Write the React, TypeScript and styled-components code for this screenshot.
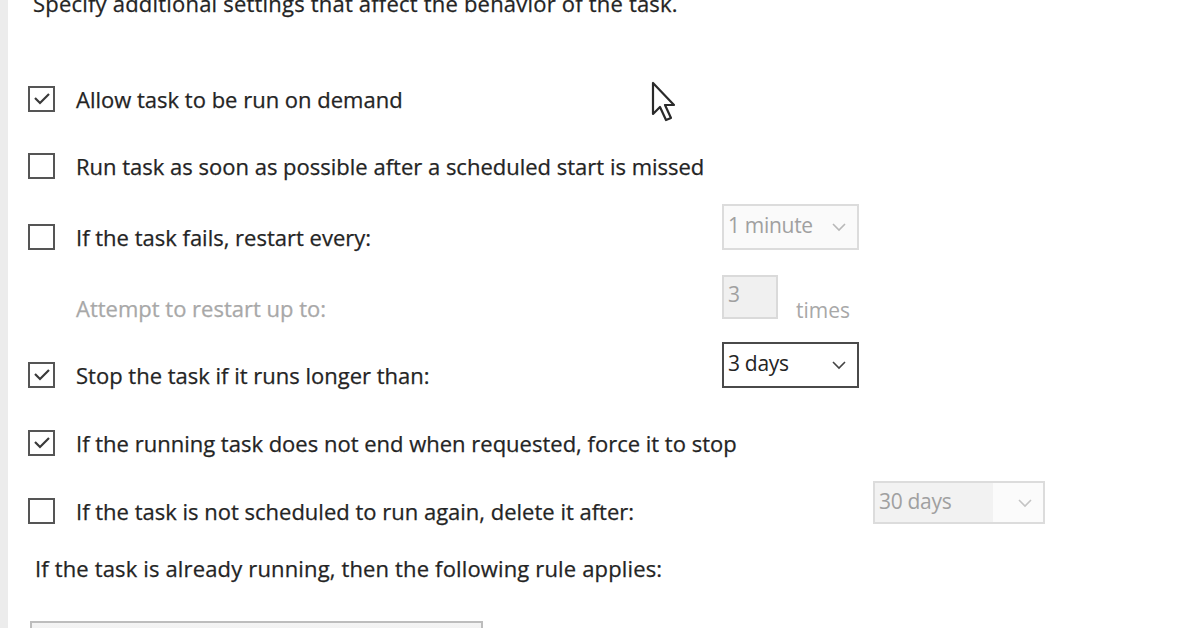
import React from 'react'
import styled, { createGlobalStyle } from 'styled-components'

const GlobalStyle = createGlobalStyle`
  html, body {
    margin: 0;
    padding: 0;
    background: #ffffff;
  }
  body {
    width: 1196px;
    height: 628px;
    overflow: hidden;
    font-family: "Open Sans", "Noto Sans", sans-serif;
    color: #242424;
  }
`

type RowSpec = {
  label: string
  checked?: boolean
  noBox?: boolean
  dim?: boolean
  gap: number
  control?: React.ReactNode
}

const Chevron: React.FC<{ color: string }> = ({ color }) => (
  <svg width="16" height="10" viewBox="0 0 16 10">
    <path d="M2 2 L8 8 L14 2" fill="none" stroke={color} strokeWidth="1.6" />
  </svg>
)

const Check: React.FC<{ checked?: boolean }> = ({ checked }) => (
  <Box>
    {checked && (
      <svg width="20" height="16" viewBox="0 0 20 16">
        <path d="M3 7 L8 12 L17 3" fill="none" stroke="#3a3a3a" strokeWidth="2.2" />
      </svg>
    )}
  </Box>
)

const Cursor: React.FC = () => (
  <Pointer width="26" height="42" viewBox="0 0 26 42">
    <path
      d="M2 2 L2 33 L9 26 L15 39 L20 37 L14 24 L23 24 Z"
      fill="#ffffff"
      stroke="#2a2a2a"
      strokeWidth="2.2"
      strokeLinejoin="round"
    />
  </Pointer>
)

export default function App() {
  const rows: RowSpec[] = [
    { label: 'Allow task to be run on demand', checked: true, gap: 59 },
    { label: 'Run task as soon as possible after a scheduled start is missed', gap: 21 },
    {
      label: 'If the task fails, restart every:',
      gap: 25,
      control: (
        <Select $disabled>
          <span>1 minute</span>
          <Chevron color="#b8b8b8" />
        </Select>
      ),
    },
    {
      label: 'Attempt to restart up to:',
      noBox: true,
      dim: true,
      gap: 25,
      control: (
        <Spin>
          <NumberBox>3</NumberBox>
          <Unit>times</Unit>
        </Spin>
      ),
    },
    {
      label: 'Stop the task if it runs longer than:',
      checked: true,
      gap: 21,
      control: (
        <Select>
          <span>3 days</span>
          <Chevron color="#444" />
        </Select>
      ),
    },
    {
      label: 'If the running task does not end when requested, force it to stop',
      checked: true,
      gap: 22,
    },
    {
      label: 'If the task is not scheduled to run again, delete it after:',
      gap: 22,
      control: (
        <Select $disabled $wide $shift={151}>
          <span>30 days</span>
          <Chevron color="#c4c4c4" />
        </Select>
      ),
    },
  ]

  return (
    <>
      <GlobalStyle />
      <Window>
        <Panel>
          <Intro>Specify additional settings that affect the behavior of the task.</Intro>
          {rows.map((r) => (
            <Row key={r.label} $gap={r.gap}>
              <BoxCell>{!r.noBox && <Check checked={r.checked} />}</BoxCell>
              <Label $dim={r.dim}>{r.label}</Label>
              <ControlCell>{r.control}</ControlCell>
            </Row>
          ))}
          <Note>If the task is already running, then the following rule applies:</Note>
          <RuleSelect />
          <Cursor />
        </Panel>
      </Window>
    </>
  )
}

const Window = styled.div`
  display: flex;
  height: 628px;
  border-left: 8px solid #ececec;
  box-sizing: border-box;
  overflow: hidden;
`

const Panel = styled.div`
  position: relative;
  flex: 1;
  display: flex;
  flex-direction: column;
  padding-left: 20px;
  & > * {
    flex-shrink: 0;
  }
`

const Intro = styled.div`
  margin-top: -11px;
  margin-left: 5px;
  font-size: 22px;
  line-height: 28px;
  letter-spacing: 0.2px;
  white-space: nowrap;
  -webkit-text-stroke: 0.25px #242424;
`

const Row = styled.div<{ $gap: number }>`
  display: grid;
  grid-template-columns: 48px 646px auto;
  align-items: center;
  height: 46px;
  margin-top: ${(p) => p.$gap}px;
`

const BoxCell = styled.div`
  display: flex;
  align-items: center;
`

const Box = styled.div`
  width: 23px;
  height: 22px;
  border: 2px solid #555;
  display: flex;
  align-items: center;
  justify-content: center;
  background: #fff;
`

const Label = styled.div<{ $dim?: boolean }>`
  font-size: 22px;
  white-space: nowrap;
  color: ${(p) => (p.$dim ? '#a8a8a8' : '#242424')};
  -webkit-text-stroke: 0.25px ${(p) => (p.$dim ? '#a8a8a8' : '#242424')};
`

const ControlCell = styled.div`
  align-self: start;
  margin-top: -10px;
  display: flex;
  align-items: center;
`

const Select = styled.div<{ $disabled?: boolean; $wide?: boolean; $shift?: number }>`
  box-sizing: border-box;
  width: ${(p) => (p.$wide ? 172 : 137)}px;
  height: ${(p) => (p.$wide ? 43 : 46)}px;
  margin-left: ${(p) => p.$shift ?? 0}px;
  margin-top: ${(p) => (p.$wide ? 3 : 0)}px;
  display: flex;
  align-items: center;
  justify-content: space-between;
  padding: 0 10px 0 4px;
  font-size: 21px;
  letter-spacing: -0.3px;
  border: ${(p) => (p.$disabled ? '2px solid #dcdcdc' : '2px solid #4a4a4a')};
  color: ${(p) => (p.$disabled ? '#a0a0a0' : '#242424')};
  background: ${(p) =>
    p.$disabled
      ? p.$wide
        ? 'linear-gradient(to right, #f2f2f2 0, #f2f2f2 70%, #fbfbfb 70%)'
        : '#fafafa'
      : '#ffffff'};
  span {
    margin-top: -4px;
  }
`

const Spin = styled.div`
  display: flex;
  align-items: flex-start;
`

const NumberBox = styled.div`
  box-sizing: border-box;
  width: 56px;
  height: 44px;
  padding: 0 0 6px 4px;
  display: flex;
  align-items: center;
  font-size: 21px;
  color: #a0a0a0;
  background: #f0f0f0;
  border: 2px solid #dadada;
`

const Unit = styled.span`
  margin-left: 18px;
  margin-top: 21px;
  font-size: 21px;
  color: #a8a8a8;
`

const Note = styled.div`
  margin-top: 11px;
  margin-left: 7px;
  height: 46px;
  display: flex;
  align-items: center;
  font-size: 22px;
  letter-spacing: 0.15px;
  white-space: nowrap;
  -webkit-text-stroke: 0.25px #242424;
`

const RuleSelect = styled.div`
  margin-top: 30px;
  margin-left: 2px;
  width: 453px;
  height: 40px;
  box-sizing: border-box;
  border: 2px solid #bdbdbd;
  background: linear-gradient(#f4f4f4, #e8e8e8);
`

const Pointer = styled.svg`
  position: absolute;
  left: 643px;
  top: 81px;
`
